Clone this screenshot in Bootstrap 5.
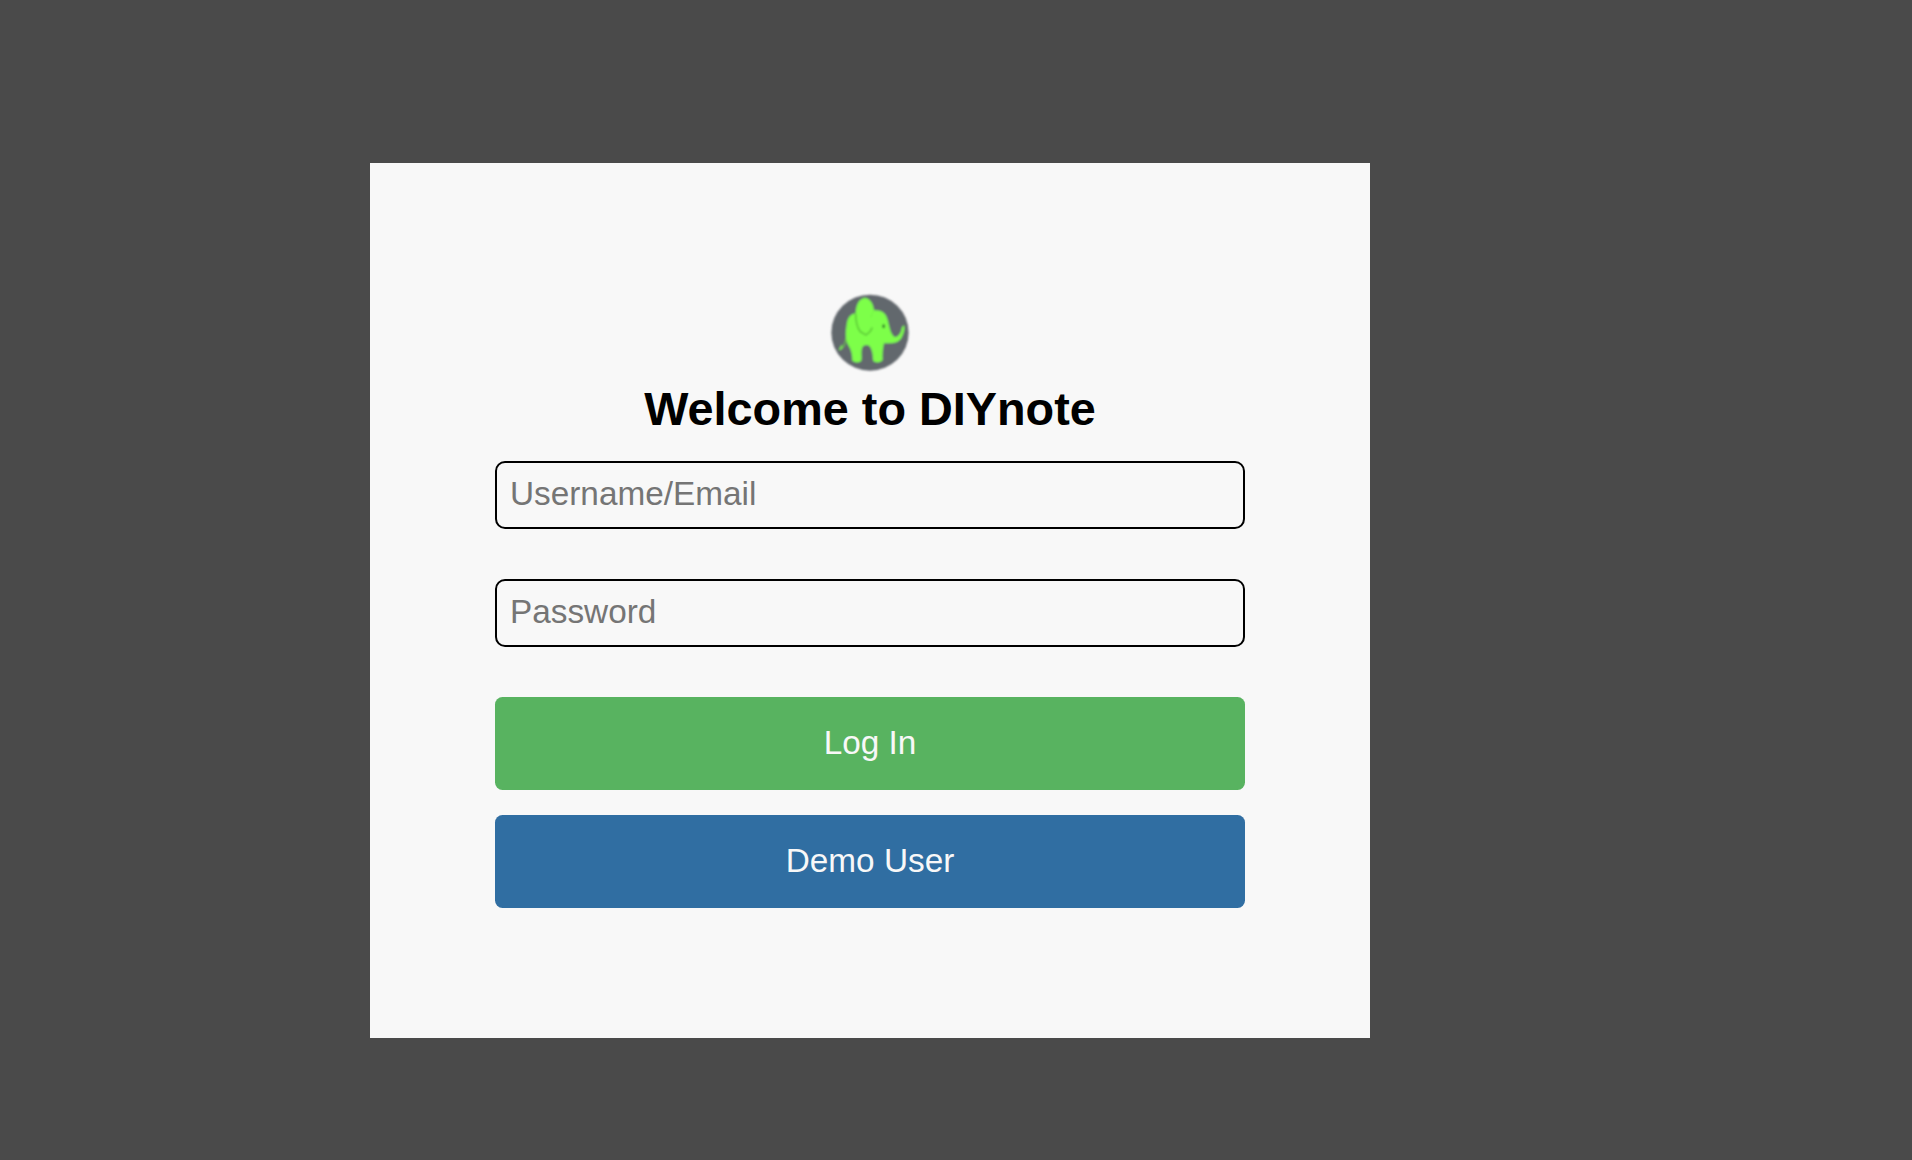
<!DOCTYPE html>
<html lang="en">
<head>
<meta charset="utf-8">
<meta name="viewport" content="width=device-width, initial-scale=1">
<title>DIYnote</title>
<link href="https://cdn.jsdelivr.net/npm/bootstrap@5.3.0/dist/css/bootstrap.min.css" rel="stylesheet">
<style>
  body { background: #4a4a4a; font-family: "Liberation Sans", Arial, sans-serif; padding: 163px 0 0 370px; }
  .login-panel { width: 1000px; height: 875px; background: #f8f8f8; padding: 122px 125px 0; }
  .brand-logo { width: 100px; height: 95px; flex: none; }
  .welcome { font-size: 46.8px; line-height: 54px; margin: 2px 0 25px; color: #000; }
  .login-panel .form-control { height: 68px; border: 2px solid #000; border-radius: 10px; padding: 0 13px 2px; font-size: 33.33px; line-height: 40px; background: #f8f8f8; color: #000; box-shadow: none; margin-bottom: 50px; }
  .login-panel .form-control::placeholder { color: #757575; opacity: 1; }
  .login-panel .btn { height: 93px; border: 0; border-radius: 7.5px; padding: 0 0 2px; font-size: 33.33px; color: #f8f8f8; }
  .login-panel .btn-login { background: #58b360; margin-bottom: 25px; }
  .login-panel .btn-demo { background: #306ea2; }
</style>
</head>
<body>
<main class="login-panel">
  <form class="d-flex flex-column align-items-center">
    <svg class="brand-logo" viewBox="0 0 300 285" role="img" aria-label="DIYnote elephant">
      <defs><filter id="soft" x="-10%" y="-10%" width="120%" height="120%"><feGaussianBlur stdDeviation="3"/></filter></defs>
      <g filter="url(#soft)">
        <ellipse cx="150" cy="143" rx="116" ry="114" fill="#62686d"/>
        <path d="M83 150Q77 165 73 181L62 191" fill="none" stroke="#68bb4c" stroke-width="4"/>
        <path d="M56 194L66 178L68 190L60 196Z" fill="#78e450"/>
        <path d="M107 85C108 57 119 40 135 39C151 40 160 57 162 76C180 73 196 82 201 99C207 114 208 139 220 153C226 160 236 153 241 144C246 136 243 127 252 121C256 129 250 151 242 162C231 176 211 175 192 175C188 190 187 207 188 226Q176 237 160 229C158 211 158 200 151 187C145 177 130 178 126 190C122 203 127 215 124 228Q111 237 97 227C97 210 94 195 85 181C76 165 76 143 80 119C83 98 90 88 107 85Z" fill="#7dff48"/>
        <path d="M107 86C107 113 111 127 121 140L138 150L150 140L157 128" fill="none" stroke="#55bd35" stroke-width="4"/>
        <path d="M162 77Q154 86 153 98" fill="none" stroke="#71ef42" stroke-width="2"/>
        <ellipse cx="191" cy="124" rx="4" ry="6" fill="#28702b"/>
      </g>
    </svg>
    <h1 class="welcome fw-bold text-center">Welcome to DIYnote</h1>
    <input class="form-control" type="text" placeholder="Username/Email" aria-label="Username/Email">
    <input class="form-control" type="password" placeholder="Password" aria-label="Password">
    <button class="btn btn-login w-100" type="button">Log In</button>
    <button class="btn btn-demo w-100" type="button">Demo User</button>
  </form>
</main>
<script src="https://cdn.jsdelivr.net/npm/bootstrap@5.3.0/dist/js/bootstrap.bundle.min.js"></script>
</body>
</html>
